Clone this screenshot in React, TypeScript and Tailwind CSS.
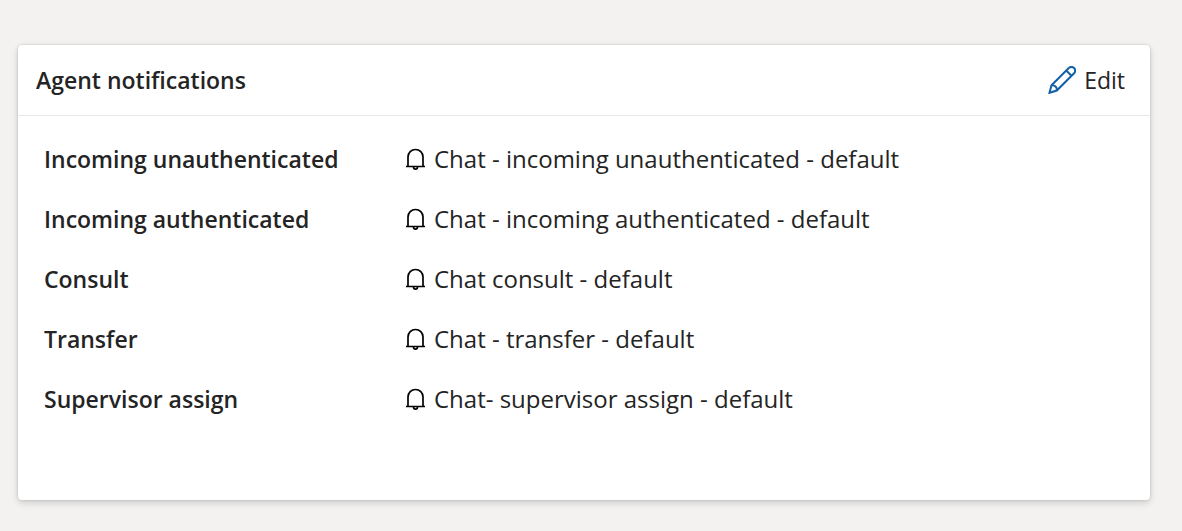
const rows = [
  ["Incoming unauthenticated", "Chat - incoming unauthenticated - default"],
  ["Incoming authenticated", "Chat - incoming authenticated - default"],
  ["Consult", "Chat consult - default"],
  ["Transfer", "Chat - transfer - default"],
  ["Supervisor assign", "Chat- supervisor assign - default"],
];

function Bell() {
  return (
    <svg aria-hidden="true" className="h-6 w-5 shrink-0 text-black" viewBox="0 0 20 24" fill="none" stroke="currentColor" strokeWidth="1.7">
      <path d="M0 19.500h19M2 19.500V10a7.500 7.500 0 0 1 15 0v9.500M7.500 20a2 2.200 0 0 0 4 0" />
    </svg>
  );
}

function Pencil() {
  return (
    <svg aria-hidden="true" className="size-7 shrink-0 text-[#1160a8]" viewBox="0 0 28 28" fill="none" stroke="currentColor" strokeWidth="2">
      <path d="M1.500 26.800L3.500 19.300L20.800 2a3.700 3.700 0 0 1 5.300 5.300L8.800 24.500zM18.200 4.500l5.300 5.300M3.500 19.300a4.500 4.500 0 0 1 5.300 5.200" />
    </svg>
  );
}

export default function App() {
  return (
    <main className="min-h-screen bg-[#f3f2f1] pt-[45px] pr-8 pb-[31px] pl-[18px] font-['Open_Sans','Noto_Sans',sans-serif] text-[#242424]">
      <section className="rounded bg-white pb-[83px] shadow-[0_3px_7px_rgba(0,0,0,0.15),0_0_3px_rgba(0,0,0,0.15)]">
        <header className="flex items-center justify-between border-b border-[#e8e8e8] py-[17px] pr-[25px] pl-[18px]">
          <h1 className="text-[23px] leading-9 font-semibold">Agent notifications</h1>
          <button type="button" className="flex items-center gap-2 text-[23px] leading-9">
            <Pencil />
            Edit
          </button>
        </header>
        <dl className="flex flex-col gap-6 px-[26px] pt-[25px]">
          {rows.map(([name, value]) => (
            <div key={name} className="flex leading-9">
              <dt className="w-[362px] shrink-0 text-[23px] font-semibold">{name}</dt>
              <dd className="flex items-center gap-2 text-2xl leading-9"><Bell />{value}</dd>
            </div>
          ))}
        </dl>
      </section>
    </main>
  );
}
